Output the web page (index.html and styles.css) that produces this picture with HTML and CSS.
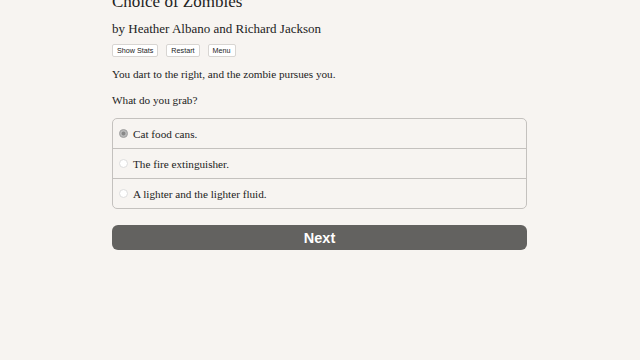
FILE: index.html
```html
<!DOCTYPE html>
<html lang="en">

<head>
    <meta charset="UTF-8">
    <title>Choice of Zombies</title>
    <link rel="stylesheet" href="styles.css">
</head>

<body>
    <div class="container">
        <h1 class="title">Choice of Zombies</h1>
        <h2 class="author">by Heather Albano and Richard Jackson</h2>
        <div class="buttons">
            <button class="spacedLink">Show Stats</button>
            <button class="spacedLink">Restart</button>
            <button class="spacedLink">Menu</button>
        </div>
        <p class="first">You dart to the right, and the zombie pursues you.</p>
        <p>What do you grab?</p>
        <div class="choice">
            <label class="option selected"><span class="radio"></span>Cat food cans.</label>
            <label class="option"><span class="radio"></span>The fire extinguisher.</label>
            <label class="option"><span class="radio"></span>A lighter and the lighter fluid.</label>
        </div>
        <button class="next">Next</button>
    </div>
</body>

</html>
```

FILE: styles.css
```css
body {
    margin: 0;
    padding: 0;
    background: #f7f4f1;
    color: #222;
    font-family: "Liberation Serif", serif;
    overflow: hidden;
}

.container {
    width: 415px;
    margin: -10px auto 0 112px;
}

.title {
    font-size: 17px;
    font-weight: normal;
    margin: 0;
    line-height: 24px;
}

.author {
    font-size: 13px;
    font-weight: normal;
    margin: 6px 0 0;
    line-height: 18px;
}

.buttons {
    display: flex;
    gap: 8px;
    margin-top: 6px;
}

.spacedLink {
    font-family: "Liberation Sans", sans-serif;
    font-size: 7.2px;
    background: #fff;
    border: 1px solid #d8d5d2;
    border-radius: 2px;
    padding: 1px 4px;
    color: #222;
    line-height: 9px;
}

p {
    font-size: 11.2px;
    margin: 12px 0 0;
    line-height: 14px;
}

p.first {
    margin-top: 10px;
}

.choice {
    margin-top: 11px;
    border: 1px solid #c4c1be;
    border-radius: 5px;
}

.option {
    display: flex;
    align-items: center;
    height: 29px;
    padding-left: 6px;
    font-size: 11.2px;
    border-top: 1px solid #c4c1be;
}

.option:first-child {
    border-top: none;
}

.radio {
    width: 7px;
    height: 7px;
    border: 1px solid #ddd;
    border-radius: 50%;
    background: #fff;
    margin-right: 5px;
}

.selected .radio {
    background: #888;
    border-color: #aaa;
    box-shadow: inset 0 0 0 1.5px #bbb;
}

.next {
    display: block;
    width: 100%;
    height: 25px;
    margin-top: 16px;
    background: #636260;
    color: #fff;
    border: none;
    border-radius: 6px;
    font-family: "Liberation Sans", sans-serif;
    font-weight: bold;
    font-size: 14.5px;
}
```
